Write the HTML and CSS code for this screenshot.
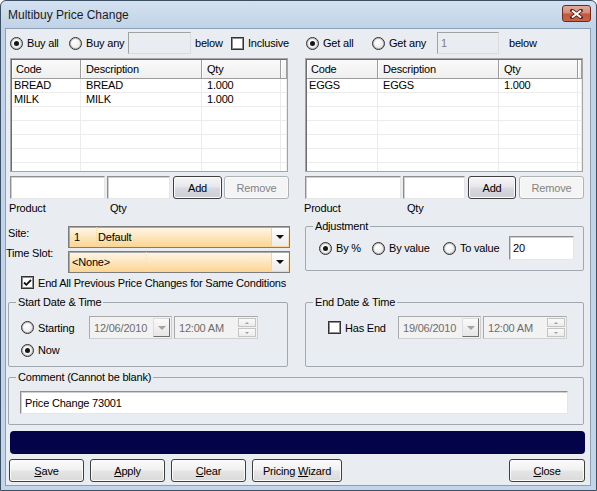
FILE: index.html
```html
<!DOCTYPE html>
<html lang="en">
<head>
    <meta charset="UTF-8">
    <title>Multibuy Price Change</title>
    <link rel="stylesheet" href="styles.css">
</head>
<body>
<div class="window">
    <div class="titlebar">
        <span class="title">Multibuy Price Change</span>
        <span class="close-btn">
            <svg width="13" height="10" viewBox="0 0 13 10">
                <path d="M2 1.5 L11 8.5 M11 1.5 L2 8.5" stroke="#5b2117" stroke-width="3.6" stroke-linecap="square"/>
                <path d="M2 1.5 L11 8.5 M11 1.5 L2 8.5" stroke="#fff" stroke-width="2"/>
            </svg>
        </span>
    </div>

    <div class="client">
        <!-- buy / get options -->
        <div class="pane top-row">
            <div class="col-l line">
                <span class="opt w-buyall"><span class="radio checked"></span>Buy all</span>
                <span class="opt w-buyany"><span class="radio"></span>Buy any</span>
                <span class="field flat w-any"></span>
                <span class="below-l">below</span>
                <span class="opt"><span class="check"></span>Inclusive</span>
            </div>
            <div class="col-r line">
                <span class="opt w-getall"><span class="radio checked"></span>Get all</span>
                <span class="opt w-getany"><span class="radio"></span>Get any</span>
                <span class="field flat w-getnum">1</span>
                <span class="below-r">below</span>
            </div>
        </div>

        <!-- product grids -->
        <div class="pane grids">
            <div class="col-l">
                <div class="grid">
                    <div class="grid-inner">
                        <table>
                            <thead>
                                <tr><th class="c-code">Code</th><th class="c-desc">Description</th><th class="c-qty">Qty</th><th></th></tr>
                            </thead>
                            <tbody>
                                <tr><td>BREAD</td><td>BREAD</td><td>1.000</td><td></td></tr>
                                <tr><td>MILK</td><td>MILK</td><td>1.000</td><td></td></tr>
                                <tr><td></td><td></td><td></td><td></td></tr>
                                <tr><td></td><td></td><td></td><td></td></tr>
                                <tr><td></td><td></td><td></td><td></td></tr>
                                <tr><td></td><td></td><td></td><td></td></tr>
                                <tr><td></td><td></td><td></td><td></td></tr>
                            </tbody>
                        </table>
                    </div>
                </div>
            </div>
            <div class="col-r">
                <div class="grid">
                    <div class="grid-inner">
                        <table>
                            <thead>
                                <tr><th class="c-code r">Code</th><th class="c-desc">Description</th><th class="c-qty">Qty</th><th></th></tr>
                            </thead>
                            <tbody>
                                <tr><td>EGGS</td><td>EGGS</td><td>1.000</td><td></td></tr>
                                <tr><td></td><td></td><td></td><td></td></tr>
                                <tr><td></td><td></td><td></td><td></td></tr>
                                <tr><td></td><td></td><td></td><td></td></tr>
                                <tr><td></td><td></td><td></td><td></td></tr>
                                <tr><td></td><td></td><td></td><td></td></tr>
                                <tr><td></td><td></td><td></td><td></td></tr>
                            </tbody>
                        </table>
                    </div>
                </div>
            </div>
        </div>

        <!-- add product rows -->
        <div class="pane add-row">
            <div class="col-l line">
                <span class="field w-prod-l"></span>
                <span class="field w-qty-l"></span>
                <span class="btn add w-add-l">Add</span>
                <span class="btn disabled w-rem">Remove</span>
            </div>
            <div class="col-r line">
                <span class="field w-prod-r"></span>
                <span class="field w-qty-r"></span>
                <span class="btn add w-add-r">Add</span>
                <span class="btn disabled w-rem">Remove</span>
            </div>
        </div>
        <div class="pane caption-row">
            <div class="col-l line">
                <span class="cap-prod-l">Product</span><span>Qty</span>
            </div>
            <div class="col-r line">
                <span class="cap-prod-r">Product</span><span>Qty</span>
            </div>
        </div>

        <!-- site / adjustment -->
        <div class="pane lower">
            <div class="col-l">
                <div class="site-grid">
                    <span class="site-label">Site:</span>
                    <div class="combo">
                        <span class="combo-code">1</span>
                        <span class="combo-text">Default</span>
                        <span class="combo-btn"><span class="tri"></span></span>
                    </div>
                    <span class="slot-label">Time Slot:</span>
                    <div class="combo">
                        <span class="combo-none">&lt;None&gt;</span>
                        <span class="combo-text"></span>
                        <span class="combo-btn"><span class="tri"></span></span>
                    </div>
                </div>
                <div class="opt end-all">
                    <span class="check">
                        <svg width="11" height="11" viewBox="0 0 11 11"><path d="M2 5.5 L4.3 7.8 L9 3" fill="none" stroke="#111" stroke-width="1.8"/></svg>
                    </span>End All Previous Price Changes for Same Conditions
                </div>
            </div>
            <div class="col-r">
                <fieldset class="group adjust">
                    <legend>Adjustment</legend>
                    <div class="line adjust-line">
                        <span class="opt w-byp"><span class="radio checked"></span>By %</span>
                        <span class="opt w-byv"><span class="radio"></span>By value</span>
                        <span class="opt w-tov"><span class="radio"></span>To value</span>
                        <span class="field w-adj">20</span>
                    </div>
                </fieldset>
            </div>
        </div>

        <!-- dates -->
        <div class="pane dates">
            <fieldset class="group start">
                <legend>Start Date &amp; Time</legend>
                <div class="line date-line">
                    <span class="opt w-starting"><span class="radio"></span>Starting</span>
                    <span class="date-box">12/06/2010<span class="date-btn"><span class="tri grey"></span></span></span>
                    <span class="time-box">12:00 AM<span class="spin"><span class="spin-up"><span class="tri-up"></span></span><span class="spin-dn"><span class="tri-dn"></span></span></span></span>
                </div>
                <div class="opt now-line"><span class="radio checked"></span>Now</div>
            </fieldset>
            <fieldset class="group end">
                <legend>End Date &amp; Time</legend>
                <div class="line date-line end-line">
                    <span class="opt w-hasend"><span class="check"></span>Has End</span>
                    <span class="date-box">19/06/2010<span class="date-btn"><span class="tri grey"></span></span></span>
                    <span class="time-box">12:00 AM<span class="spin"><span class="spin-up"><span class="tri-up"></span></span><span class="spin-dn"><span class="tri-dn"></span></span></span></span>
                </div>
            </fieldset>
        </div>

        <!-- comment -->
        <fieldset class="group comment">
            <legend>Comment (Cannot be blank)</legend>
            <div class="field comment-field">Price Change 73001</div>
        </fieldset>

        <div class="status-bar"></div>

        <div class="button-row">
            <span class="btn w-std"><span><u>S</u>ave</span></span>
            <span class="btn w-std"><span><u>A</u>pply</span></span>
            <span class="btn w-std"><span><u>C</u>lear</span></span>
            <span class="btn w-wizard"><span>Pricing <u>W</u>izard</span></span>
            <span class="btn w-close"><span><u>C</u>lose</span></span>
        </div>
    </div>
</div>
</body>
</html>
```

FILE: styles.css
```css
* {
    box-sizing: border-box;
}
body {
    margin: 0;
    font-family: "Liberation Sans", Arial, sans-serif;
    font-size: 11px;
    letter-spacing: -0.2px;
    color: #000;
    background: #fff;
}

/* window frame */
.window {
    width: 597px;
    height: 491px;
    display: flex;
    flex-direction: column;
    padding: 0 5px 4px 4px;
    border: 1px solid #3d4f63;
    border-radius: 6px 6px 0 0;
    background: linear-gradient(#d3e1f1, #c1d3e8 27px, #c3d5ea);
}
.titlebar {
    height: 27px;
    flex: none;
    display: flex;
    justify-content: space-between;
    align-items: center;
    padding-left: 3px;
}
.title {
    font-size: 12px;
    letter-spacing: 0;
    color: #1b1b1b;
}
.close-btn {
    align-self: flex-start;
    margin-top: 4px;
    width: 29px;
    height: 17px;
    display: flex;
    align-items: center;
    justify-content: center;
    border: 1px solid #6b2a1e;
    border-radius: 3px;
    background: linear-gradient(#e3ab9c, #d68a77 45%, #c4553d 55%, #c9634a);
}
.client {
    flex: 1;
    border: 1px solid #8d9fb5;
    background: #e9edf2;
    padding-left: 4px;
}

/* two column panes */
.pane {
    display: flex;
    gap: 15px;
}
.col-l {
    width: 280px;
    flex: none;
}
.col-r {
    width: 279px;
    flex: none;
}
.line {
    display: flex;
    align-items: center;
}

.top-row {
    margin-top: 3px;
    height: 22px;
}
.grids {
    margin-top: 4px;
    height: 114px;
}
.add-row {
    margin-top: 4px;
    height: 23px;
}
.caption-row {
    margin-top: 2px;
    height: 14px;
}
.caption-row .line {
    height: 14px;
}
.lower {
    height: 74px;
}
.dates {
    margin-top: 7px;
    margin-left: -2px;
    gap: 17px;
}

/* radio + checkbox */
.opt {
    display: flex;
    align-items: center;
    white-space: nowrap;
}
.radio {
    position: relative;
    width: 13px;
    height: 13px;
    flex: none;
    margin-right: 4px;
    border: 1px solid #2e2e2e;
    border-radius: 50%;
    background: radial-gradient(circle at 40% 35%, #ffffff, #e4e4e4);
    box-shadow: inset 0 0 0 1px #b9b9b9;
}
.radio.checked::after {
    content: "";
    position: absolute;
    left: 3px;
    top: 3px;
    width: 5px;
    height: 5px;
    border-radius: 50%;
    background: #151515;
}
.check {
    width: 13px;
    height: 13px;
    flex: none;
    margin-right: 4px;
    border: 1px solid #333;
    box-shadow: inset 0 0 0 1px #8e8e8e;
    background: #fff;
    display: flex;
    align-items: center;
    justify-content: center;
}

.w-buyall { width: 59px; }
.w-buyany { width: 59px; }
.w-getall { width: 66px; margin-left: 1px; }
.w-getany { width: 65px; }
.below-l { width: 36px; margin-left: 4px; }
.below-r { margin-left: 10px; }

/* text boxes */
.field {
    display: flex;
    align-items: center;
    height: 23px;
    padding-left: 3px;
    background: #fff;
    border: 1px solid;
    border-color: #8f8f8f #e6e6e6 #e6e6e6 #8f8f8f;
    box-shadow: inset 1px 1px 0 #cfcfcf;
}
.field.flat {
    height: 22px;
    background: #e9edf2;
    border-color: #a2a2a2 #dcdcdc #dcdcdc #a2a2a2;
    box-shadow: none;
    color: #7d7d7d;
}
.w-any { width: 63px; }
.w-getnum { width: 62px; }
.w-prod-l { width: 95px; }
.w-qty-l { width: 63px; margin-left: 2px; }
.w-prod-r { width: 96px; }
.w-qty-r { width: 62px; margin-left: 2px; }

/* buttons */
.btn {
    display: flex;
    align-items: center;
    justify-content: center;
    height: 23px;
    border: 1px solid #3f3f3f;
    border-radius: 3px;
    background: linear-gradient(#fbfbfb, #f1f1f1 45%, #e4e4e4 55%, #dadada);
    box-shadow: inset 0 0 0 1px #fafafa;
    color: #000;
    white-space: nowrap;
}
.btn.add {
    background: linear-gradient(#f6f6f8, #e8e8ec 45%, #d8d8df 55%, #cdcdd6);
}
.btn.disabled {
    border-color: #adb2b5;
    background: #f4f4f4;
    color: #838383;
}
.w-add-l { width: 49px; margin-left: 3px; }
.w-add-r { width: 48px; margin-left: 3px; }
.w-rem { width: 65px; margin-left: 2px; }
.col-r .w-rem { margin-left: 3px; }

.cap-prod-l { width: 101px; margin-left: -1px; }
.cap-prod-r { width: 103px; margin-left: -1px; }

/* grids */
.grid {
    height: 114px;
    width: 278px;
    border: 1px solid #a4a4a4;
}
.grid-inner {
    height: 100%;
    overflow: hidden;
    background: #fff;
    border-top: 1px solid #6c6c6c;
    border-left: 1px solid #6c6c6c;
}
table {
    width: 100%;
    table-layout: fixed;
    border-collapse: separate;
    border-spacing: 0;
}
th {
    height: 19px;
    padding: 0 0 0 4px;
    text-align: left;
    font-weight: normal;
    background: linear-gradient(#fafafa, #efefef);
    border-right: 1px solid #9d9d9d;
    border-bottom: 1px solid #9d9d9d;
    box-shadow: inset 1px 0 0 #ffffff;
}
th.c-code { width: 69px; }
th.c-code.r { width: 71px; }
th.c-desc { width: 121px; padding-left: 5px; }
th.c-qty { width: 79px; padding-left: 5px; }
td {
    height: 14px;
    padding: 0 0 0 5px;
    border-right: 1px solid #ececec;
    border-bottom: 1px solid #ececec;
    white-space: nowrap;
    line-height: 13px;
}
td:first-child {
    padding-left: 2px;
}

/* site and time slot */
.site-grid {
    margin-top: 11px;
    display: grid;
    grid-template-columns: 58px 222px;
    row-gap: 3px;
}
.site-label {
    margin-left: -2px;
    line-height: 14px;
}
.slot-label {
    margin-left: -4px;
    margin-top: -5px;
    line-height: 14px;
}
.combo {
    display: flex;
    align-items: center;
    height: 22px;
    border: 1px solid #7c7c7c;
    box-shadow: inset 1px 1px 0 #a9a9a9;
    background: linear-gradient(#fff6e9, #fde6bd 50%, #fbd592);
}
.combo-code {
    width: 28px;
    height: 100%;
    display: flex;
    align-items: center;
    padding-left: 5px;
    border-right: 1px dotted #f2d7a6;
}
.combo-text {
    flex: 1;
    padding-left: 1px;
}
.combo-none {
    width: 78px;
    height: 100%;
    display: flex;
    align-items: center;
    padding-left: 3px;
    border-right: 1px dotted #f5e0b8;
}
.combo-btn {
    width: 17px;
    height: 18px;
    margin-right: 1px;
    display: flex;
    align-items: center;
    justify-content: center;
    background: linear-gradient(#ffffff, #ebebeb);
    border-left: 1px solid #d8d8d8;
}
.tri {
    width: 0;
    height: 0;
    border-left: 4px solid transparent;
    border-right: 4px solid transparent;
    border-top: 4px solid #111;
}
.tri.grey {
    border-top-color: #a4a4a4;
}
.end-all {
    margin-top: 3px;
    margin-left: 11px;
    height: 13px;
}

/* group boxes */
.group {
    margin: 0;
    padding: 0;
    border: 1px solid #a1a8af;
    border-radius: 2px;
    min-width: 0;
}
.group legend {
    margin-left: 7px;
    padding: 0 2px;
    line-height: 13px;
}
.adjust {
    margin-top: 5px;
    height: 51px;
}
.adjust-line {
    margin-top: 3px;
    padding-left: 13px;
}
.w-byp { width: 53px; }
.w-byv { width: 71px; }
.w-tov { width: 66px; }
.w-adj { width: 65px; height: 24px; }

.start {
    width: 280px;
    height: 71px;
}
.end {
    width: 279px;
    height: 71px;
}
.date-line {
    margin-top: 7px;
    padding-left: 12px;
}
.end-line {
    padding-left: 22px;
}
.w-starting { width: 68px; }
.w-hasend { width: 70px; }
.now-line {
    margin-top: 4px;
    padding-left: 12px;
    height: 14px;
}
.date-box,
.time-box {
    display: flex;
    align-items: center;
    justify-content: space-between;
    height: 23px;
    padding: 0 1px 0 4px;
    color: #6d6d6d;
    background: #f2f2f2;
    border: 1px solid;
    border-color: #a9a9a9 #cfcfcf #cfcfcf #a9a9a9;
}
.date-box {
    width: 83px;
}
.time-box {
    width: 84px;
    margin-left: 2px;
}
.date-btn {
    width: 17px;
    height: 19px;
    display: flex;
    align-items: center;
    justify-content: center;
    background: linear-gradient(#fafafa, #e6e6e6);
    border: 1px solid;
    border-color: #dcdcdc #6f6f6f #6f6f6f #dcdcdc;
}
.spin {
    width: 18px;
    height: 19px;
    display: flex;
    flex-direction: column;
    gap: 1px;
}
.spin-up,
.spin-dn {
    flex: 1;
    display: flex;
    align-items: center;
    justify-content: center;
    background: linear-gradient(#fafafa, #ececec);
    border: 1px solid #c4c4c4;
}
.tri-up {
    border-left: 2px solid transparent;
    border-right: 2px solid transparent;
    border-bottom: 2px solid #a0a0a0;
}
.tri-dn {
    border-left: 2px solid transparent;
    border-right: 2px solid transparent;
    border-top: 2px solid #a0a0a0;
}

.comment {
    margin-top: 4px;
    margin-left: -2px;
    width: 576px;
    height: 54px;
}
.comment-field {
    margin: 7px 0 0 11px;
    width: 548px;
    padding-left: 4px;
}

.status-bar {
    margin-top: 6px;
    width: 575px;
    height: 23px;
    border-radius: 4px;
    background: #03034a;
}

.button-row {
    margin-top: 5px;
    margin-left: -1px;
    width: 576px;
    display: flex;
    gap: 6px;
}
.w-std { width: 75px; }
.w-wizard { width: 90px; }
.w-close {
    width: 76px;
    margin-left: auto;
}
```
